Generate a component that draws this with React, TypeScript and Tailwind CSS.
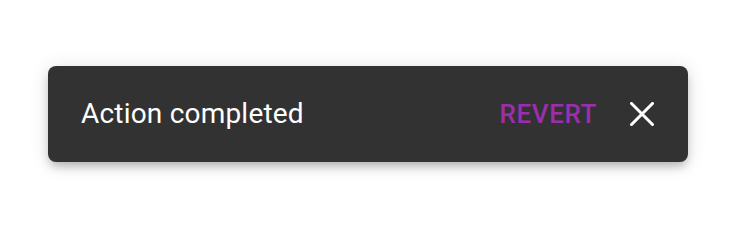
export default function App() {
  return (
    <div className="w-[740px] h-[204px] bg-white pt-[66px] pl-[48px]" style={{ fontFamily: 'Roboto, "Liberation Sans", sans-serif' }}>
      <div className="w-[640px] h-[96px] rounded-[8px] bg-[#323232] flex items-center pl-[33px] pr-[34px] shadow-[0_6px_10px_-2px_rgba(0,0,0,0.25),0_2px_20px_0_rgba(0,0,0,0.12)]">
        <span className="text-white text-[28px] leading-none tracking-[0.2px] flex-1">Action completed</span>
        <span className="text-[#9b2ead] text-[26px] font-medium leading-none tracking-[0.6px]">REVERT</span>
        <svg className="ml-[33px]" width="24" height="24" viewBox="0 0 24 24" fill="none">
          <path d="M1.5 1.5 L22.5 22.5 M22.5 1.5 L1.5 22.5" stroke="white" strokeWidth="3" strokeLinecap="square" />
        </svg>
      </div>
    </div>
  );
}
